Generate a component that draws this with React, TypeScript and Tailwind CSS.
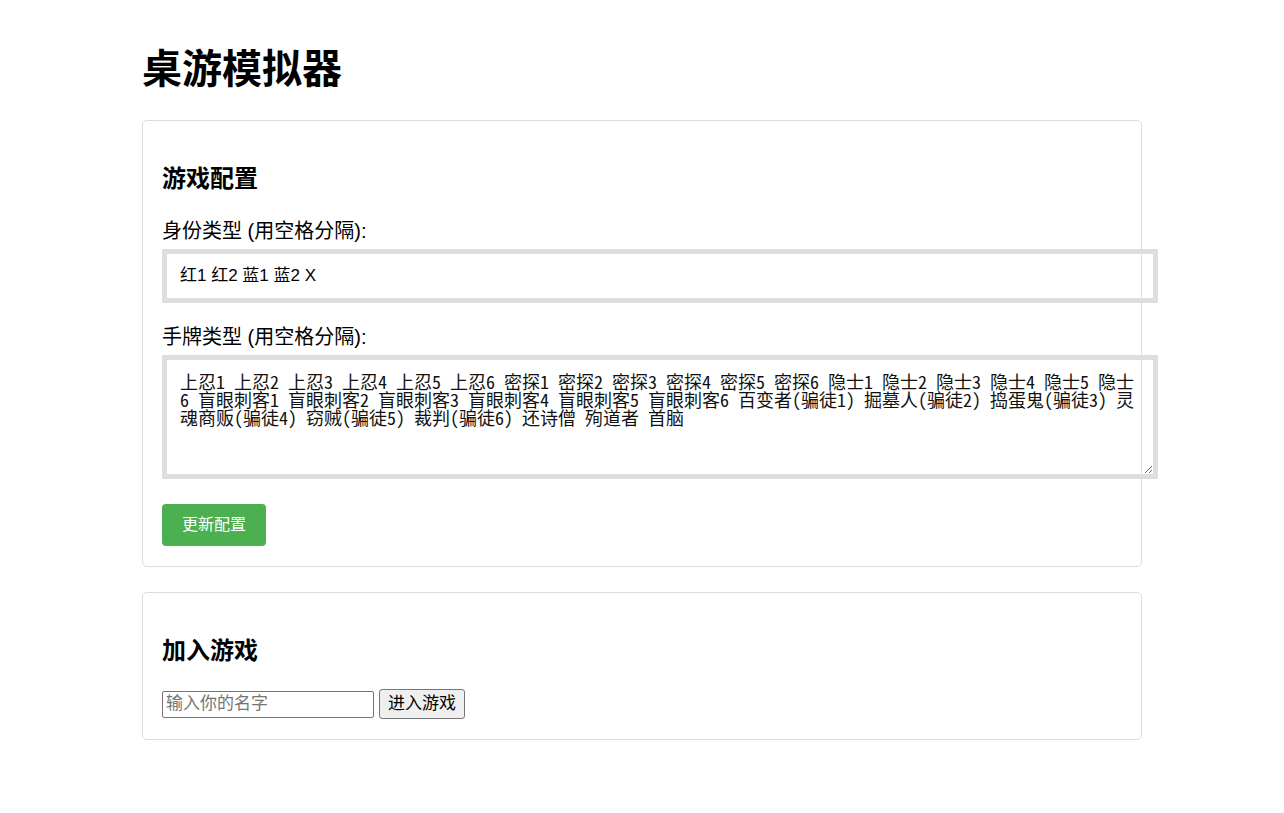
import React, { useState } from 'react';

const sans = "font-['Liberation_Sans','Noto_Sans_CJK_SC',sans-serif]";

const DEFAULT_ROLES = '红1 红2 蓝1 蓝2 X';
const DEFAULT_CARDS =
  '上忍1 上忍2 上忍3 上忍4 上忍5 上忍6 密探1 密探2 密探3 密探4 密探5 密探6 隐士1 隐士2 隐士3 隐士4 隐士5 隐士6 盲眼刺客1 盲眼刺客2 盲眼刺客3 盲眼刺客4 盲眼刺客5 盲眼刺客6 百变者(骗徒1) 掘墓人(骗徒2) 捣蛋鬼(骗徒3) 灵魂商贩(骗徒4) 窃贼(骗徒5) 裁判(骗徒6) 还诗僧 殉道者 首脑';

const App: React.FC = () => {
  const [roles, setRoles] = useState(DEFAULT_ROLES);
  const [cards, setCards] = useState(DEFAULT_CARDS);
  const [name, setName] = useState('');

  return (
    <div className={`min-h-[813px] bg-white text-black ${sans}`}>
      <div className="mx-auto w-full max-w-[1000px] pt-[45px]">
        <h1 className="mb-[27px] text-[40px] font-bold leading-[48px]">桌游模拟器</h1>

        {/* 游戏配置 */}
        <div className="mb-[25px] rounded-[5px] border border-[#dddddd] px-[19px] pt-5 pb-5">
          <h2 className="mt-5 mb-5 text-[24px] font-bold leading-[36px]">游戏配置</h2>

          <label className="mb-1 block text-[20px] leading-[28px]">身份类型 (用空格分隔):</label>
          <input
            type="text"
            value={roles}
            onChange={e => setRoles(e.target.value)}
            className="mb-5 box-content block h-5 w-full border-[5px] border-[#dddddd] py-3 pl-[13px] pr-[13px] text-[17px] leading-5 outline-none"
          />

          <label className="mb-1 block text-[20px] leading-[28px]">手牌类型 (用空格分隔):</label>
          <textarea
            rows={5}
            value={cards}
            onChange={e => setCards(e.target.value)}
            className="box-content block h-[90px] w-full border-[5px] border-[#dddddd] py-3 pl-[13px] pr-[13px] font-['Noto_Sans_Mono_CJK_SC','Liberation_Mono','Noto_Sans_CJK_SC',monospace] text-[18px] leading-[18px] text-[#111] outline-none"
          />

          <button className="mt-[25px] block h-[42px] rounded-[4px] bg-[#4caf50] px-5 text-[16px] text-white">
            更新配置
          </button>
        </div>

        {/* 加入游戏 */}
        <div className="rounded-[5px] border border-[#dddddd] px-[19px] pt-5 pb-5">
          <h2 className="mt-5 mb-5 text-[24px] font-bold leading-[36px]">加入游戏</h2>

          <div className="flex items-center">
            <input
              type="text"
              placeholder="输入你的名字"
              value={name}
              onChange={e => setName(e.target.value)}
              className="h-[27px] w-[212px] rounded-[2px] border border-[#767676] px-[3px] text-[17px] outline-none placeholder:text-[#757575]"
            />
            <button className="ml-[5px] h-[30px] rounded-[3px] border border-[#767676] bg-[#efefef] px-[8px] text-[17px]">
              进入游戏
            </button>
          </div>
        </div>
      </div>
    </div>
  );
};

export default App;
